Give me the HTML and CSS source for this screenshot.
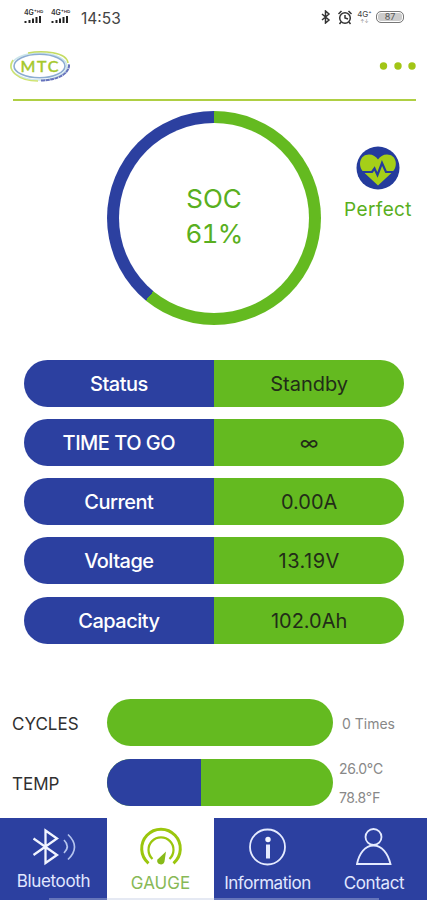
FILE: index.html
```html
<!DOCTYPE html>
<html lang="en">
<head>
<meta charset="utf-8">
<title>Battery gauge</title>
<link rel="stylesheet" href="styles.css">
</head>
<body>
<div class="app">
  <header class="statusbar">
    <div class="signals">
      <div class="signal"><span class="net">4G⁺ᴴᴰ</span><svg width="18" height="8" viewBox="0 0 18 8"><path d="M1.500 5v2M5.500 4v3M9 2.500v4.500M12.500 1v6M16 0v7" stroke="#222" stroke-width="2"/></svg></div>
      <div class="signal"><span class="net">4G⁺ᴴᴰ</span><svg width="18" height="8" viewBox="0 0 18 8"><path d="M1.500 5v2M5.500 4v3M9 2.500v4.500M12.500 1v6M16 0v7" stroke="#222" stroke-width="2"/></svg></div>
    </div>
    <span class="clock">14:53</span>
    <div class="system">
      <svg width="10" height="14" viewBox="0 0 10 14" fill="none" stroke="#333" stroke-width="1.500"><path d="M1 4l7 6-3.500 3V1L8 4l-7 6"/></svg>
      <svg class="alarm" width="16" height="15" viewBox="0 0 16 15" fill="none" stroke="#333" stroke-width="1.500"><circle cx="8" cy="8" r="5.300"/><path d="M8 5v3l3 1M1.500 4l3-3M11.500 1l3 3M4 12l-1.500 2M12 12l1.500 2"/></svg>
      <div class="data"><span>4G⁺</span><small>↑↓</small></div>
      <div class="battery">87</div>
    </div>
  </header>
  <div class="topbar">
    <svg class="logo" width="62" height="34" viewBox="0 0 62 34" fill="none">
      <ellipse cx="30" cy="16.500" rx="28" ry="13.500" stroke="#cce6ea" stroke-width="1.500"/>
      <path d="M19 3C33 0 58 2 59 13" stroke="#c5dc62" stroke-width="1.500"/>
      <path d="M4 10C-3 20 9 31 29 31" stroke="#cfe36d" stroke-width="1.500"/>
      <path d="M32 30.500C50 30 61 23 60 14" stroke="#6672bc" stroke-width="2" stroke-dasharray="4 .5"/>
      <ellipse cx="30.500" cy="16" rx="25.500" ry="11.800" stroke="#8cacd2" stroke-width="1.600"/>
      <text x="11.500" y="21.500" class="logo-text" textLength="38" lengthAdjust="spacing">MTC</text>
    </svg>
    <svg class="more" width="38" height="8" viewBox="0 0 38 8" fill="#a2c516"><circle cx="5.500" cy="4" r="3.700"/><circle cx="20" cy="4" r="3.700"/><circle cx="34" cy="4" r="3.700"/></svg>
  </div>
  <section class="overview">
    <div class="soc">
      <div class="soc-text"><span>SOC</span><span class="percent">61%</span></div>
    </div>
    <div class="health">
      <svg width="44" height="44" viewBox="0 0 44 44"><circle cx="22" cy="22" r="21.500" fill="#243b9c"/><path d="M22 39.500L7.500 26C1.500 20 3.500 8.500 13 8.500c4 0 7 2 9 5 2-3 5-5 9-5 9.500 0 11.500 11.500 5.500 17.500z" fill="#a5cf18"/><path d="M4 26h12l2.500-3.500L21.500 29 26 17l4 9h10" fill="none" stroke="#243b9c" stroke-width="2.200"/></svg>
      <span>Perfect</span>
    </div>
  </section>
  <section class="readings">
    <div class="reading"><span class="name">Status</span><span class="value">Standby</span></div>
    <div class="reading"><span class="name">TIME TO GO</span><span class="value">∞</span></div>
    <div class="reading"><span class="name">Current</span><span class="value">0.00A</span></div>
    <div class="reading"><span class="name">Voltage</span><span class="value volts">13.19V</span></div>
    <div class="reading"><span class="name">Capacity</span><span class="value">102.0Ah</span></div>
  </section>
  <section class="meters">
    <div class="meter"><span class="label">CYCLES</span><div class="bar"></div><span class="times">0 Times</span></div>
    <div class="meter"><span class="label">TEMP</span><div class="bar"><div class="fill" style="width:41.500%"></div></div><div class="degrees"><span>26.0℃</span><span>78.8℉</span></div></div>
  </section>
  <nav class="tabs">
    <div class="tab">
      <svg width="48" height="42" viewBox="0 0 48 42" fill="none" stroke="#f1f4ff" stroke-width="2.300"><path d="M3.500 12.500L27 29l-11.500 8V4.500L27 12.500 3.500 29"/><path d="M34 14q6.500 6.500 0 13M38 8.500q13 12.500 0 25" stroke="#b5c4ee" stroke-width="1.700"/></svg>
      <span class="t-bt">Bluetooth</span>
    </div>
    <div class="tab active">
      <svg width="44" height="42" viewBox="0 0 44 42" fill="none" stroke="#9bc60d"><path d="M9.500 37.300A19.300 19.300 0 1 1 34.500 37.300" stroke-width="3"/><path d="M13.500 33A12.500 12.500 0 1 1 30.500 33" stroke-width="2.200"/><path d="M27 25.500l-8.500 8c-2 5 6 7 7 2z" fill="#87ba18" stroke="none"/></svg>
      <span class="t-gauge">GAUGE</span>
    </div>
    <div class="tab">
      <svg width="40" height="42" viewBox="0 0 40 42" fill="none" stroke="#e5ebff" stroke-width="1.800"><circle cx="19.500" cy="21" r="17.500"/><circle cx="20" cy="13.500" r="2.700" fill="#f4f7ff" stroke="none"/><path d="M20 18.500v14" stroke-width="4"/></svg>
      <span class="t-info">Information</span>
    </div>
    <div class="tab">
      <svg width="40" height="42" viewBox="0 0 40 42" fill="none" stroke="#e5ebff" stroke-width="1.800"><circle cx="19.500" cy="11" r="8"/><path d="M3 38C5 27.500 11 19.500 19.500 19.500S34 27.500 36.500 38z"/></svg>
      <span class="t-contact">Contact</span>
    </div>
    <div class="homebar"></div>
  </nav>
</div>
</body>
</html>
```

FILE: styles.css
```css
* { box-sizing: border-box; }
body { margin: 0; background: #fff; font-family: Inter, "Noto Sans", sans-serif; }
.app { width: 427px; height: 900px; overflow: hidden; display: flex; flex-direction: column; }
svg { display: block; flex: none; }
span { white-space: nowrap; }
.statusbar { height: 34px; flex: none; display: flex; align-items: center; padding: 0 23px 0 24px; }
.signals { display: flex; gap: 9px; width: 57px; }
.signal { width: 18px; height: 16px; }
.net { display: block; font-size: 7px; line-height: 7px; font-weight: 600; letter-spacing: -.1px; height: 7px; color: #333; }
.clock { font-size: 15.500px; line-height: 20px; padding-top: 3px; color: #444; }
.system { margin-left: auto; display: flex; align-items: center; }
.alarm { margin-left: 6px; }
.data { width: 15px; margin-left: 4px; display: flex; flex-direction: column; align-items: center; font-size: 8px; line-height: 9px; color: #444; }
.data small { font-size: 5px; line-height: 5px; color: #888; }
.battery { width: 28px; height: 12px; margin-left: 4px; border: 1px solid #777; border-radius: 5px; box-shadow: inset 0 0 0 1px #fff; background: #ccc; font-size: 9px; line-height: 10px; text-align: center; color: #555; }
.topbar { height: 67px; flex: none; margin: 0 11px 0 13px; border-bottom: 2px solid #afcf43; display: flex; justify-content: space-between; align-items: flex-start; }
.logo { margin: 16px 0 0 -4px; }
.logo-text { font: 400 16px Lato, sans-serif; fill: #a5c82b; stroke: #a5c82b; stroke-width: .5px; }
.more { margin-top: 28px; }
.overview { height: 258px; flex: none; display: flex; padding: 10px 0 0 107px; }
.soc { width: 214px; height: 214px; flex: none; border-radius: 50%; background: conic-gradient(#64ba20 61%, #2c40a0 0); padding: 12px; }
.soc-text { height: 190px; border-radius: 50%; background: #fff; display: flex; flex-direction: column; align-items: center; padding-top: 58px; color: #59af20; font-size: 26px; line-height: 35px; }
.soc-text .percent { font-variant-numeric: tabular-nums; letter-spacing: -.7px; }
.health { width: 70px; margin: 35px 0 0 22px; display: flex; flex-direction: column; align-items: center; color: #59af20; font-size: 19px; line-height: 26px; }
.health span { margin-top: 7px; letter-spacing: .4px; }
.readings { height: 340px; flex: none; display: flex; flex-direction: column; gap: 12.300px; padding: .500px 23.500px 0 24px; }
.reading { display: grid; grid-template-columns: 1fr 1fr; height: 47px; flex: none; border-radius: 23.500px; overflow: hidden; text-align: center; font-size: 20px; line-height: 49.500px; }
.name { background: #2c40a0; color: #fff; font-weight: 500; letter-spacing: -.5px; }
.value { background: #64ba20; color: #222c18; padding-left: 1px; }
.volts { letter-spacing: .5px; }
.meters { height: 119px; flex: none; display: flex; flex-direction: column; gap: 13px; }
.meter { height: 47px; flex: none; display: flex; align-items: center; }
.label { width: 95px; margin-left: 12px; font-size: 17px; color: #303030; padding-top: 2px; }
.bar { width: 226px; height: 47px; flex: none; border-radius: 23.500px; overflow: hidden; background: #64ba20; }
.fill { height: 100%; background: #2c40a0; }
.times { margin-left: 9px; font-size: 14px; color: #888; padding-top: 2px; }
.degrees { margin-left: 6px; display: flex; flex-direction: column; font-size: 14px; line-height: 29px; color: #888; letter-spacing: -.4px; padding-top: 1px; }
.tabs { position: relative; height: 82px; flex: none; display: grid; grid-template-columns: 107px 107px 107px 106px; }
.tab { display: flex; flex-direction: column; align-items: center; padding-top: 8px; background: #2c40a0; color: #e1e7ff; font-size: 17px; line-height: 24px; }
.tab span { margin-top: 3px; letter-spacing: -.35px; }
.tab .t-bt { margin-top: 1px; }
.tab .t-info { letter-spacing: -.45px; }
.tab .t-gauge { letter-spacing: 0; }
.tab.active { background: #fff; color: #88b957; }
.homebar { position: absolute; left: 49px; bottom: 0; width: 330px; height: 2px; background: rgba(190, 200, 225, .4); }
```
